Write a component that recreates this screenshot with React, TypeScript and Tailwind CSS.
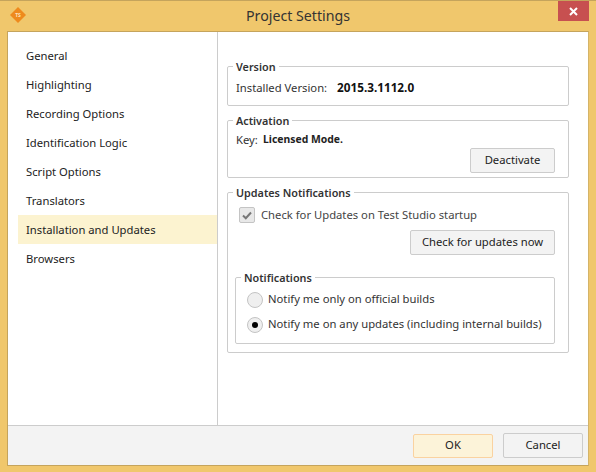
const navItems = [
  'General',
  'Highlighting',
  'Recording Options',
  'Identification Logic',
  'Script Options',
  'Translators',
  'Installation and Updates',
  'Browsers',
];

function GroupBox({ title, className, children }: { title: string; className: string; children: React.ReactNode }) {
  return (
    <fieldset className={`border border-[#cccccc] rounded-[2px] ${className}`}>
      <legend className="-ml-[3px] px-[3px] h-[12px] leading-[14px] text-[10.8px] font-semibold text-[#333333]">{title}</legend>
      {children}
    </fieldset>
  );
}

function Button({ label, className }: { label: string; className: string }) {
  return (
    <button className={`h-[25px] bg-[#f3f3f3] border border-[#cccccc] rounded-[2px] text-[11.25px] text-[#222222] ${className}`}>
      {label}
    </button>
  );
}

function Radio({ label, checked }: { label: string; checked?: boolean }) {
  return (
    <div className="flex items-center gap-[5px] h-[25px] pl-[3px] text-[11.25px] text-[#333333] whitespace-nowrap">
      <span className="w-[16px] h-[16px] rounded-full border border-[#c4c4c4] bg-[#efefef] flex items-center justify-center">
        {checked && <span className="w-[6px] h-[6px] rounded-full bg-black" />}
      </span>
      {label}
    </div>
  );
}

export default function App() {
  return (
    <div
      className="w-[596px] h-[472px] bg-[#f0c76c] flex flex-col overflow-hidden border-t border-[#c5a45c]"
      style={{ fontFamily: '"Noto Sans", "Open Sans", sans-serif' }}
    >
      {/* title bar */}
      <div className="h-[30px] shrink-0 flex items-start relative">
        <svg className="absolute left-[10px] top-[6px]" width="16" height="16" viewBox="0 0 16 16">
          <polygon points="8,0 16,8 8,16 0,8" fill="#ee8a1d" />
          <text x="8" y="10" textAnchor="middle" fontSize="5" fontWeight="700" fill="#fde3bd">TS</text>
        </svg>
        <div className="flex-1 text-center text-[14.2px] leading-[29px] text-[#333333]">Project Settings</div>
        <div className="absolute right-[7px] top-0 w-[31px] h-[20px] bg-[#c75050] flex items-center justify-center">
          <svg width="9" height="9" viewBox="0 0 9 9">
            <path d="M1 1 L8 8 M8 1 L1 8" stroke="#ffffff" strokeWidth="2" />
          </svg>
        </div>
      </div>

      {/* client area */}
      <div className="mx-[7px] h-[435px] bg-white border-t border-x border-b border-[#c5a45c] border-r-[#d4b469] flex flex-col">
        <div className="flex-1 flex min-h-0">
          <nav className="w-[210px] shrink-0 border-r border-[#cccccc] pt-[9px] pl-[10px]">
            {navItems.map((item) => (
              <div
                key={item}
                className={`h-[29px] pl-[8px] pt-[1px] flex items-center text-[11.25px] text-[#222222] ${
                  item === 'Installation and Updates' ? 'bg-[#fcf3d0]' : ''
                }`}
              >
                {item}
              </div>
            ))}
          </nav>

          <div className="flex-1 pl-[9px] pr-[19px] pt-[28px] flex flex-col gap-[8px]">
            <GroupBox title="Version" className="h-[46px] px-[8px]">
              <div className="flex items-center h-[24px] mt-[4px] text-[11.25px] text-[#333333]">
                <span className="w-[101px]">Installed Version:</span>
                <span className="font-bold text-[11.75px] text-[#111111]">2015.3.1112.0</span>
              </div>
            </GroupBox>

            <GroupBox title="Activation" className="h-[64px] px-[8px]">
              <div className="flex items-center h-[20px] mt-[4px] text-[11.25px] text-[#333333]">
                <span className="w-[27px]">Key:</span>
                <span className="font-bold text-[10.4px] text-[#222222]">Licensed Mode.</span>
              </div>
              <div className="flex justify-end pr-[5px] -mt-[2px]">
                <Button label="Deactivate" className="w-[85px]" />
              </div>
            </GroupBox>

            <GroupBox title="Updates Notifications" className="h-[167px] pl-[8px] pr-[13px]">
              <div className="flex items-center gap-[6px] h-[24px] mt-[5px] pl-[3px] text-[11.25px] text-[#444444]">
                <span className="w-[16px] h-[16px] rounded-[2px] border border-[#c4c4c4] bg-[#e8e8e8] flex items-center justify-center">
                  <svg width="10" height="9" viewBox="0 0 10 9">
                    <path d="M1 4.5 L3.8 7.2 L9 1.5" fill="none" stroke="#777777" strokeWidth="2" />
                  </svg>
                </span>
                Check for Updates on Test Studio startup
              </div>
              <div className="flex justify-end mt-[3px]">
                <Button label="Check for updates now" className="w-[145px]" />
              </div>
              <GroupBox title="Notifications" className="h-[73px] mt-[16px] -ml-[1px] px-[8px]">
                <div className="mt-[4px]">
                  <Radio label="Notify me only on official builds" />
                  <Radio label="Notify me on any updates (including internal builds)" checked />
                </div>
              </GroupBox>
            </GroupBox>
          </div>
        </div>

        {/* footer */}
        <div className="h-[40px] shrink-0 bg-[#f3f3f3] border-t border-[#cccccc] flex items-center justify-end gap-[10px] pr-[5px]">
          <button className="w-[80px] h-[24px] bg-[#fcf3d9] border border-[#fad2a0] rounded-[2px] text-[11.25px] text-[#222222]">OK</button>
          <Button label="Cancel" className="w-[80px] h-[24px]" />
        </div>
      </div>
    </div>
  );
}
